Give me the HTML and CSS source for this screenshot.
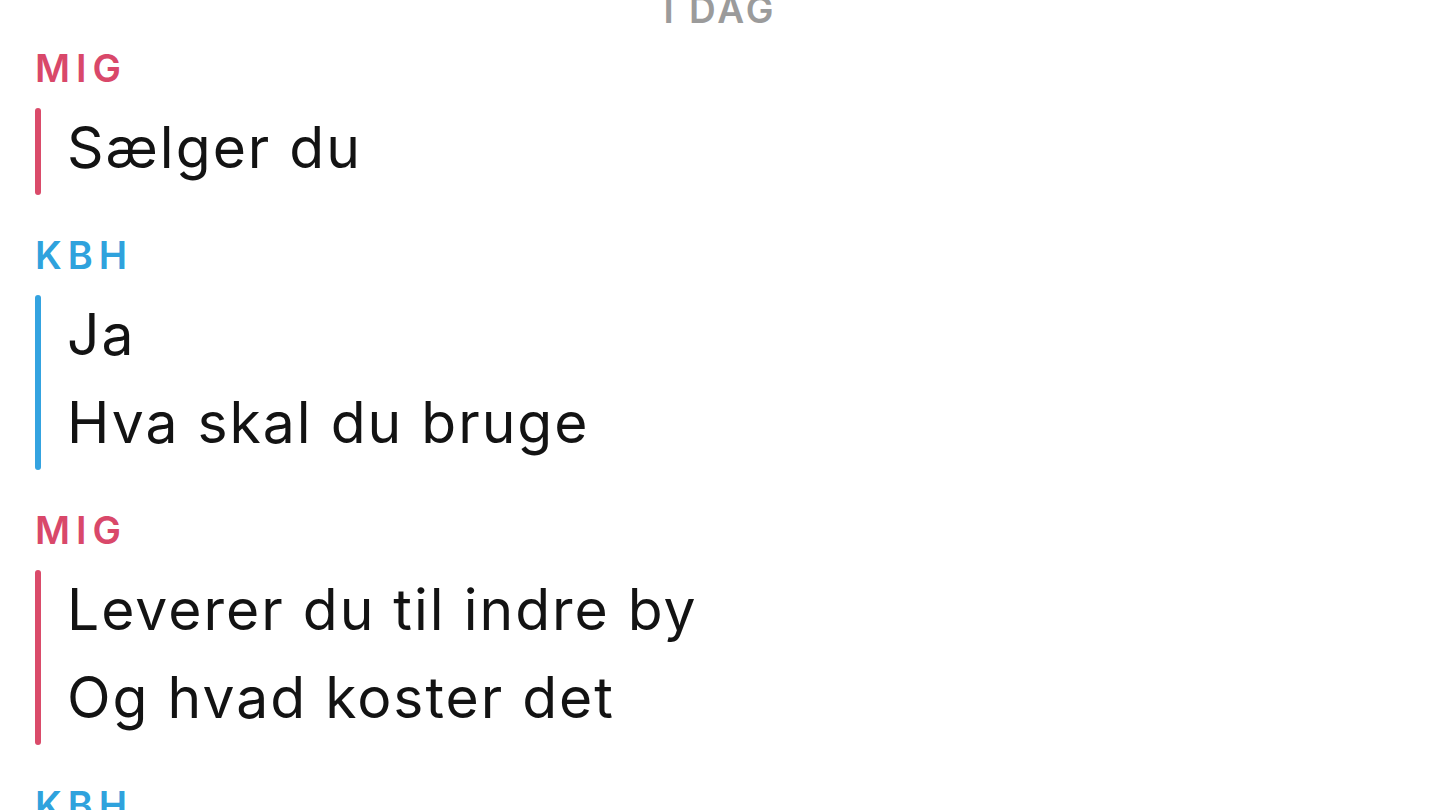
FILE: index.html
```html
<!DOCTYPE html>
<html lang="da">
<head>
<meta charset="utf-8">
<title>Chat</title>
<link rel="stylesheet" href="styles.css">
</head>
<body>
<main class="chat">
  <div class="day">I DAG</div>

  <section class="group me">
    <div class="label">MIG</div>
    <div class="msg">
      <div class="bar"></div>
      <div class="lines">
        <p class="line">Sælger du</p>
      </div>
    </div>
  </section>

  <section class="group them">
    <div class="label">KBH</div>
    <div class="msg">
      <div class="bar"></div>
      <div class="lines">
        <p class="line">Ja</p>
        <p class="line">Hva skal du bruge</p>
      </div>
    </div>
  </section>

  <section class="group me">
    <div class="label">MIG</div>
    <div class="msg">
      <div class="bar"></div>
      <div class="lines">
        <p class="line">Leverer du til indre by</p>
        <p class="line">Og hvad koster det</p>
      </div>
    </div>
  </section>

  <section class="group them">
    <div class="label">KBH</div>
  </section>
</main>
</body>
</html>
```

FILE: styles.css
```css
html, body {
  margin: 0;
  padding: 0;
  background: #ffffff;
  overflow: hidden;
}

body {
  width: 1440px;
  height: 810px;
  font-family: Inter, Lato, "Liberation Sans", sans-serif;
  font-variant-ligatures: none;
  color: #131313;
}

.chat {
  padding: 1px 0 0 35px;
}

.day {
  margin-top: -11.5px;
  margin-bottom: 16.5px;
  margin-left: -35px;
  text-align: center;
  font-size: 37px;
  line-height: 40px;
  height: 40px;
  font-weight: 600;
  letter-spacing: 3px;
  color: #9b9b9b;
}

.group {
  margin-bottom: 38.5px;
}

.label {
  font-size: 38px;
  line-height: 40px;
  height: 40px;
  padding-top: 1.5px;
  font-weight: 600;
  letter-spacing: 6px;
  margin-bottom: 20px;
}

.me .label { color: #d9486a; }
.them .label { color: #2fa2dd; }

.msg {
  display: flex;
  align-items: stretch;
}

.bar {
  width: 6px;
  flex: 0 0 6px;
  border-radius: 3px;
}

.me .bar { background: #da4b6a; }
.them .bar { background: #34a3e0; }

.lines {
  margin: -3.5px 0 2.5px 26px;
}

.line {
  margin: 0;
  font-size: 57px;
  line-height: 88px;
  font-weight: 400;
  letter-spacing: 2px;
  white-space: nowrap;
}
```
